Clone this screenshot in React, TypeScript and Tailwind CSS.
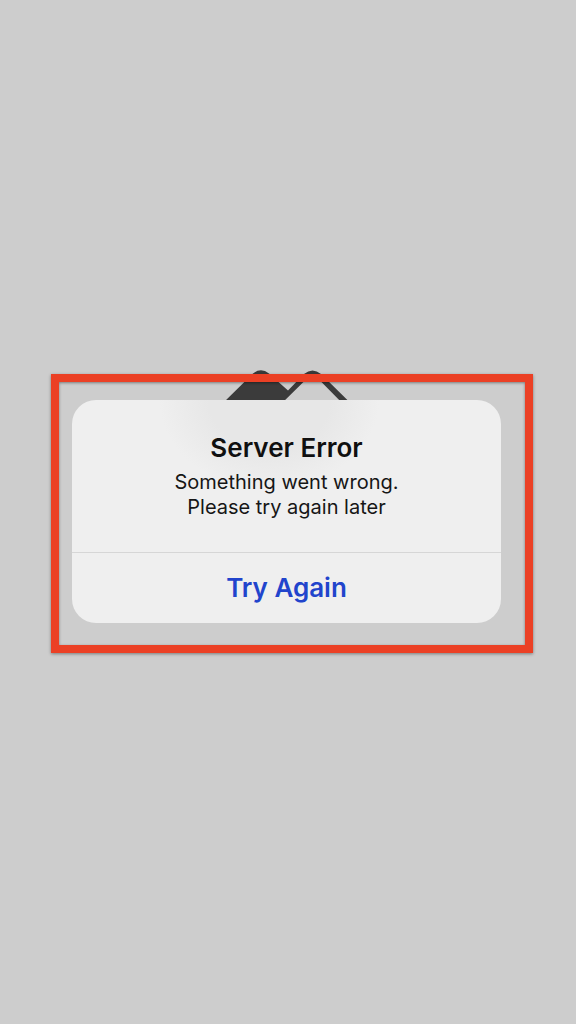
function BrandMark() {
	return (
		<svg
			className="absolute -top-1 left-1/2 -translate-x-1/2"
			width="140"
			height="40"
			viewBox="0 0 140 40"
			aria-hidden="true"
		>
			<path
				d="M-5 39 L31 3.5 Q39 -3 47 3.5 L66 20.5 L82 4 Q90.5 -3 99 4 L134.5 39 L126 39 L95 7.5 Q90.5 4 86 7.5 L54 39 Z"
				fill="#3b3b3b"
			/>
		</svg>
	);
}

function ErrorDialog() {
	return (
		<div
			role="alertdialog"
			aria-labelledby="error-title"
			aria-describedby="error-message"
			className="overflow-hidden rounded-3xl bg-[#efefef] bg-radial-[110px_90px_at_46%_0%] from-[#e7e7e7] from-55% to-[#efefef] text-center"
		>
			<div className="px-4 pt-8 pb-8">
				<h1 id="error-title" className="text-[26px] leading-8 font-semibold text-[#101010]">
					Server Error
				</h1>
				<p id="error-message" className="mt-1.5 text-xl leading-[25px] text-[#161616]">
					Something went wrong.
					<br />
					Please try again later
				</p>
			</div>
			<button
				type="button"
				className="w-full border-t border-[#d6d6d6] py-5 text-[26px] leading-[30px] font-semibold text-[#2144cc]"
			>
				Try Again
			</button>
		</div>
	);
}

export default function App() {
	return (
		<main className="flex min-h-screen items-center bg-[#cdcdcd] pt-0.5 pr-[43px] pl-[51px] font-['Inter',sans-serif]">
			<div className="relative w-full">
				<BrandMark />
				<section className="relative border-8 border-[#eb4025] pt-[18px] pr-6 pb-[22px] pl-[13px] shadow-[0_1px_3px_rgba(0,0,0,0.4),inset_0_1px_3px_rgba(0,0,0,0.4)]">
					<ErrorDialog />
				</section>
			</div>
		</main>
	);
}
